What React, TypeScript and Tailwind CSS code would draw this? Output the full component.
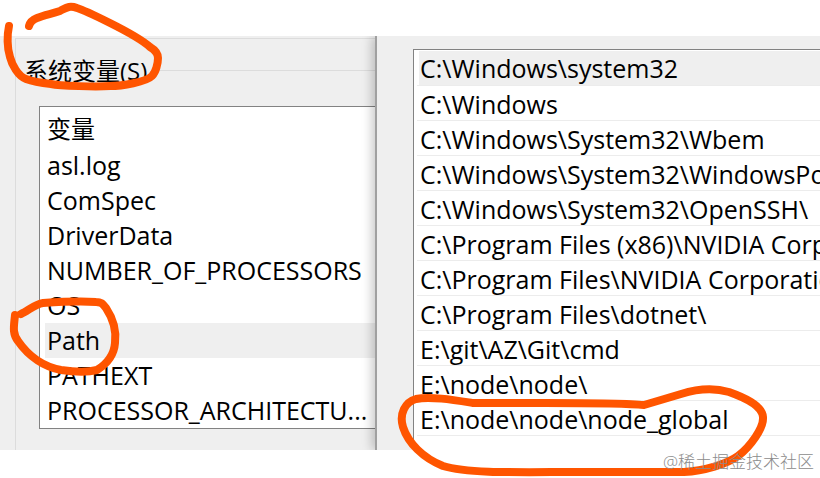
const variables = [
  'asl.log',
  'ComSpec',
  'DriverData',
  'NUMBER_OF_PROCESSORS',
  'OS',
  'Path',
  'PATHEXT',
  'PROCESSOR_ARCHITECTU...',
];

const paths = [
  'C:\\Windows\\system32',
  'C:\\Windows',
  'C:\\Windows\\System32\\Wbem',
  'C:\\Windows\\System32\\WindowsPo',
  'C:\\Windows\\System32\\OpenSSH\\',
  'C:\\Program Files (x86)\\NVIDIA Corp',
  'C:\\Program Files\\NVIDIA Corporatio',
  'C:\\Program Files\\dotnet\\',
  'E:\\git\\AZ\\Git\\cmd',
  'E:\\node\\node\\',
  'E:\\node\\node\\node_global',
];

function SystemVariables() {
  return (
    <section className="min-w-0 overflow-hidden bg-[#efefef] pt-0.5 pl-[15px]">
      <div className="h-full border-t border-l border-[#dcdcdc] pb-[21px]">
        <div className="flex h-[67px] items-center gap-2 pl-2">
          <h2 className="pb-1 text-2xl whitespace-nowrap">系统变量(S)</h2>
          <div className="mb-1 h-px flex-1 bg-[#dcdcdc]" />
        </div>
        <div className="ml-[23px] border-y border-l border-[#828282] bg-white pl-[5px]">
          <table className="w-full border-collapse text-left">
            <thead>
              <tr className="h-[41px]">
                <th scope="col" className="p-0 pt-0.5 pl-0.5 text-2xl font-normal">变量</th>
              </tr>
            </thead>
            <tbody>
              {variables.map((name) => (
                <tr key={name} className={name === 'Path' ? 'h-[35px] bg-[#efefef]' : 'h-[35px]'}>
                  <td className="p-0 pb-0.5 pl-0.5 leading-8 whitespace-nowrap">{name}</td>
                </tr>
              ))}
            </tbody>
          </table>
        </div>
      </div>
    </section>
  );
}

function PathEntries() {
  return (
    <section className="relative flex min-w-0 border-l-2 border-[#a0a0a0] bg-[#efefef] pt-[13px] pl-9 shadow-[-3px_0_10px_rgba(0,0,0,0.22)]">
      <ul className="min-w-0 flex-1 overflow-hidden border-t border-l border-[#828282] bg-white pt-px pl-[3px]">
        {paths.map((path, index) => (
          <li key={path} className="h-[35px] border-b border-[#ececec] pl-0.5">
            <div className={index === 0 ? 'bg-[#efefef] pl-px leading-[34px] whitespace-nowrap' : 'pl-px leading-9 whitespace-nowrap'}>
              {path}
            </div>
          </li>
        ))}
      </ul>
    </section>
  );
}

// Freehand circles drawn over the two lists
function Marks() {
  return (
    <svg
      className="pointer-events-none absolute top-0 left-0"
      width="820"
      height="478"
      viewBox="0 0 820 478"
      fill="none"
      stroke="#ff5500"
      strokeWidth="8"
      strokeLinecap="round"
      strokeLinejoin="round"
      aria-hidden="true"
    >
      <path d="M9 26 C7 35 7 48 10 57 C12 65 18 76 26 79 C34 82 42 83 51 84 C60 86 97 87 110 86 C122 86 146 82 152 76 C156 72 158 63 158 58 C158 54 155 50 150 47 C140 38 124 30 110 23 C98 17 84 10 77 8 C69 5 66 8 60 11 C51 14 44 15 37 18 C32 20 30 22 29 26" />
      <path d="M15 315 C14 326 12 333 18 341 C29 357 45 367 61 370 C75 372 89 372 97 370 C105 365 114 356 115 343 C117 328 112 317 106 308 C102 303 101 302 96 302 C82 301 58 302 43 303 C35 304 28 311 21 314" />
      <path d="M644 405 C618 402 561 403 473 403 C454 400 430 396 416 399 C405 402 399 414 403 427 C408 443 423 458 443 466 C469 474 525 472 578 472 L684 472 C704 471 727 464 738 456 C750 447 764 428 763 417 C762 405 743 397 729 392 C715 388 697 389 681 394 Z" />
    </svg>
  );
}

export default function App() {
  return (
    <div className="relative min-h-screen overflow-hidden bg-white pt-9 font-['Open_Sans','Noto_Sans_CJK_SC',sans-serif] text-[25px] text-black">
      <main className="grid h-[414px] grid-cols-[375fr_445fr] overflow-hidden">
        <SystemVariables />
        <PathEntries />
      </main>
      <footer className="relative z-10 pr-1.5 text-right text-[17px] leading-6 font-light text-[#8c8c8c]">
        @稀土掘金技术社区
      </footer>
      <Marks />
    </div>
  );
}
